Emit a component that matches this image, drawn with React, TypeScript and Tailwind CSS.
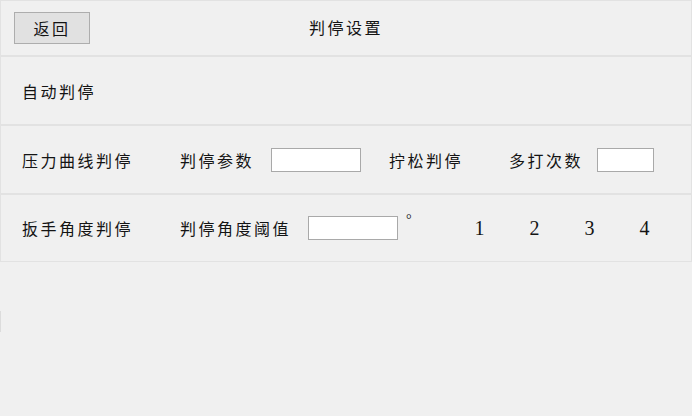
import React from "react";

const cjk = { fontFamily: '"Noto Sans CJK SC", "Noto Sans", sans-serif' };

function Field({ w }: { w: string }) {
  return <input className={`${w} h-[24px] bg-white border border-[#a9a9a9] outline-none`} />;
}

export default function App() {
  return (
    <div className="relative w-[692px] h-[416px] bg-[#f0f0f0] text-[#141414] text-[16px] tracking-[2.5px]" style={cjk}>
      {/* 顶部栏 */}
      <div className="h-[56px] border border-[#e2e2e2] grid grid-cols-[1fr_auto_1fr] items-center px-[13px]">
        <div>
          <button className="w-[76px] h-[32px] bg-[#e1e1e1] border border-[#adadad] leading-none">返回</button>
        </div>
        <span className="leading-none -mt-[2px]">判停设置</span>
        <div />
      </div>

      <div className="h-[69px] border border-[#e2e2e2] flex items-center pl-[21px]">
        <span>自动判停</span>
      </div>

      <div className="h-[69px] border border-[#e2e2e2] flex items-center pl-[21px]">
        <span className="w-[158px]">压力曲线判停</span>
        <span className="w-[91px]">判停参数</span>
        <Field w="w-[90px]" />
        <span className="ml-[28px] w-[120px]">拧松判停</span>
        <span className="w-[88px]">多打次数</span>
        <Field w="w-[57px]" />
      </div>

      <div className="h-[68px] border border-[#e2e2e2] flex items-center pl-[21px]">
        <span className="w-[158px]">扳手角度判停</span>
        <span className="w-[128px]">判停角度阈值</span>
        <Field w="w-[90px]" />
        <span className="ml-[8px] w-[46px] self-start mt-[18px] text-[14px] leading-none font-['Liberation_Serif',serif]">°</span>
        {["1", "2", "3", "4"].map((n) => (
          <span key={n} className="w-[55px] text-center tracking-normal text-[20px] font-['Liberation_Serif',serif]">{n}</span>
        ))}
      </div>

      <div className="absolute left-0 top-[311px] w-px h-[21px] bg-[#dcdcdc]" />
    </div>
  );
}
